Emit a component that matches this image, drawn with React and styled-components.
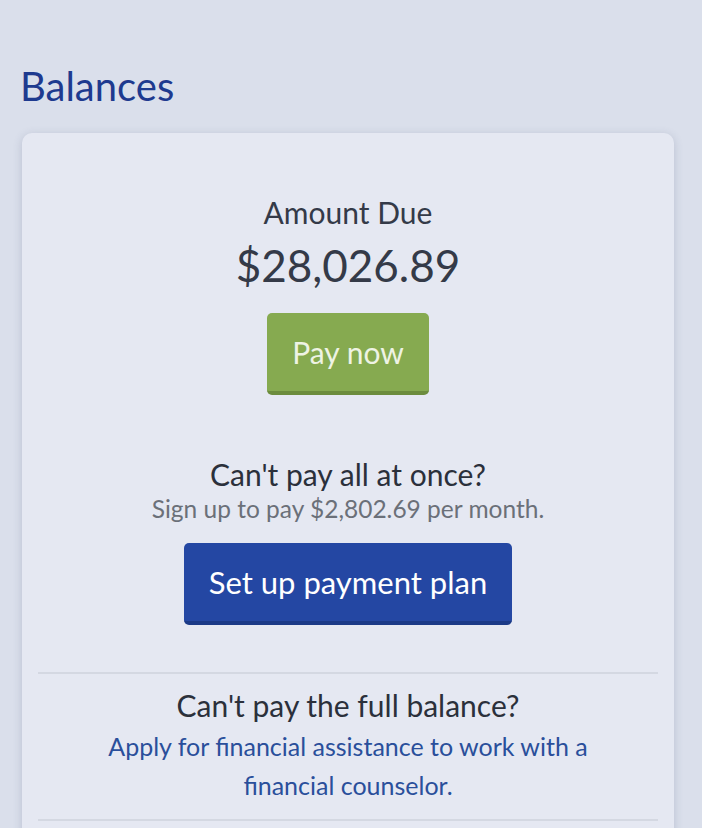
import React from "react";
import styled, { createGlobalStyle } from "styled-components";

const GlobalStyle = createGlobalStyle`
  html, body {
    margin: 0;
    padding: 0;
    background: #dadfeb;
    font-family: "Source Sans Pro", Lato, "Noto Sans", sans-serif;
  }
`;

const Page = styled.div`
  padding: 62px 28px 0 20px;
  min-height: 828px;
  box-sizing: border-box;
`;

const Heading = styled.h2`
  margin: 0 0 23px;
  font-size: 40px;
  font-weight: 400;
  line-height: 48px;
  color: #1e3a8f;
`;

const Card = styled.div`
  margin-left: 2px;
  background: #e5e8f2;
  border-radius: 10px;
  box-shadow: 0 2px 10px rgba(60, 70, 110, 0.2);
  padding: 61px 16px 40px;
  text-align: center;
`;

const Section = styled.div`
  display: flex;
  flex-direction: column;
  align-items: center;
  margin-top: ${(p) => p.$top || "0"};
`;

const Label = styled.div`
  font-size: 30px;
  line-height: 36px;
  color: #343a48;
`;

const Amount = styled.div`
  font-size: 44px;
  line-height: 52px;
  color: #343a48;
  margin: 9px 0 22px;
`;

const Button = styled.button`
  font-family: inherit;
  border: none;
  border-radius: 5px;
  cursor: pointer;
  background: ${(p) => (p.$variant === "green" ? "#86aa50" : "#2447a3")};
  border-bottom: 4px solid ${(p) => (p.$variant === "green" ? "#6c8c3e" : "#1b3a87")};
  color: ${(p) => (p.$variant === "green" ? "#eef3e4" : "#ffffff")};
  font-size: ${(p) => (p.$variant === "green" ? "30px" : "31px")};
  height: 82px;
  padding: 0 25px;
`;

const Question = styled.div`
  font-size: 30px;
  line-height: 36px;
  color: #2b303b;
`;

const Hint = styled.div`
  font-size: 24.5px;
  line-height: 30px;
  color: #6b7079;
  margin: 2px 0 19px;
`;

const Divider = styled.hr`
  border: none;
  border-top: 2px solid #d4d8e2;
  margin: ${(p) => p.$margin || "0"};
`;

const Link = styled.a`
  display: block;
  font-size: 25px;
  line-height: 39px;
  color: #2a4f9b;
  text-decoration: none;
  padding: 0 60px;
  margin-top: 4px;
`;

export default function App() {
  return (
    <>
      <GlobalStyle />
      <Page>
        <Heading>Balances</Heading>
        <Card>
          <Section>
            <Label>Amount Due</Label>
            <Amount>$28,026.89</Amount>
            <Button $variant="green">Pay now</Button>
          </Section>
          <Section $top="61px">
            <Question>Can't pay all at once?</Question>
            <Hint>Sign up to pay $2,802.69 per month.</Hint>
            <Button $variant="blue">Set up payment plan</Button>
          </Section>
          <Divider $margin="47px 0 13px" />
          <Question>Can't pay the full balance?</Question>
          <Link href="#">
            Apply for financial assistance to work with a financial counselor.
          </Link>
          <Divider $margin="14px 0 0" />
        </Card>
      </Page>
    </>
  );
}
